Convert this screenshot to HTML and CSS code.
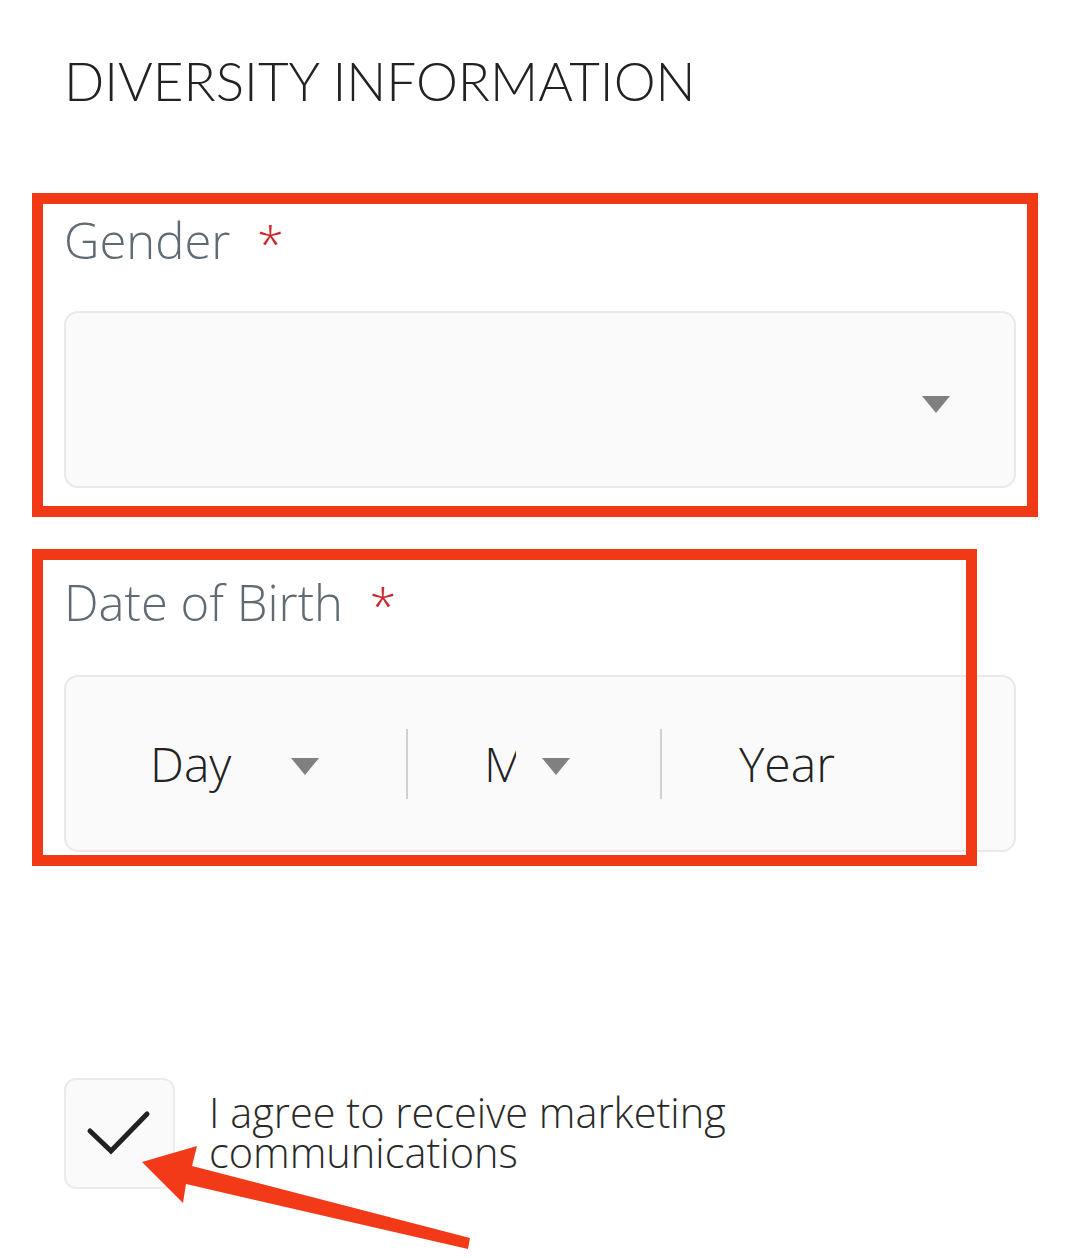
FILE: index.html
```html
<!DOCTYPE html>
<html lang="en">
<head>
<meta charset="utf-8">
<title>Diversity Information</title>
<link rel="stylesheet" href="styles.css">
</head>
<body>
<main class="page">
  <h1 class="heading">DIVERSITY INFORMATION</h1>

  <section class="form">
    <div class="field field-gender">
      <div class="label">Gender <span class="req">*</span></div>
      <div class="select">
        <span class="caret"></span>
      </div>
    </div>

    <div class="field field-dob">
      <div class="label">Date of Birth <span class="req">*</span></div>
      <div class="dob">
        <div class="seg seg-day">
          <span class="seg-text">Day</span>
          <span class="caret"></span>
        </div>
        <div class="seg seg-month">
          <span class="seg-text clip">Month</span>
          <span class="caret"></span>
        </div>
        <div class="seg seg-year">
          <span class="seg-text">Year</span>
        </div>
      </div>
    </div>

    <div class="consent">
      <div class="checkbox">
        <svg width="70" height="50" viewBox="0 0 70 50" aria-hidden="true">
          <polyline points="6,22 27,42 63,5" fill="none" stroke="#222" stroke-width="5" stroke-linecap="round" stroke-linejoin="miter"/>
        </svg>
      </div>
      <p class="consent-text">I agree to receive marketing communications</p>
    </div>

    <div class="mark mark-gender"></div>
    <div class="mark mark-dob"></div>
    <svg class="arrow" width="1080" height="1258" viewBox="0 0 1080 1258" aria-hidden="true">
      <polygon points="142,1162 197,1146 192,1166 470,1238 468,1249 186,1184 183,1203" fill="#f33a18"/>
    </svg>
  </section>
</main>
</body>
</html>
```
FILE: styles.css
```css
* { box-sizing: border-box; }
html, body { margin: 0; padding: 0; background: #fff; }
body {
  width: 1080px;
  height: 1258px;
  overflow: hidden;
  font-family: "Open Sans", "Liberation Sans", sans-serif;
  position: relative;
}
.page {
  padding: 0 0 0 64px;
}
.heading {
  margin: 0;
  padding-top: 49px;
  font-family: "Lato", "Liberation Sans", sans-serif;
  font-weight: 300;
  font-size: 53px;
  line-height: 64px;
  letter-spacing: 0;
  color: #222;
}
.form {
  padding-top: 102px;
}
.field {
  width: 952px;
}
.label {
  font-weight: 300;
  font-size: 49px;
  line-height: 50px;
  color: #5f6a72;
  height: 50px;
}
.req {
  color: #c8262b;
  margin-left: 14px;
  font-size: 48px;
  position: relative;
  top: 2px;
}
.select {
  margin-top: 46px;
  height: 177px;
  background: #fafafa;
  border: 2px solid #e9e9e9;
  border-radius: 14px;
  display: flex;
  align-items: center;
  justify-content: flex-end;
  padding-right: 64px;
}
.caret {
  display: inline-block;
  width: 0;
  height: 0;
  border-left: 14px solid transparent;
  border-right: 14px solid transparent;
  border-top: 17px solid #808080;
}
.select .caret { margin-top: 10px; }
.field-dob { margin-top: 89px; }
.dob {
  margin-top: 48px;
  height: 177px;
  background: #fafafa;
  border: 2px solid #e9e9e9;
  border-radius: 14px;
  display: flex;
  align-items: center;
}
.seg {
  display: flex;
  align-items: center;
  height: 70px;
}
.seg-day { width: 340px; padding-left: 84px; }
.seg-month { width: 254px; padding-left: 76px; border-left: 2px solid #d0d0d0; }
.seg-year { flex: 1; padding-left: 77px; border-left: 2px solid #d0d0d0; }
.seg-text {
  font-weight: 300;
  font-size: 48px;
  line-height: 70px;
  color: #222;
  white-space: nowrap;
}
.seg-day .caret { margin-left: 60px; margin-top: 6px; }
.seg-month .caret { margin-left: 26px; margin-top: 6px; }
.clip {
  display: inline-block;
  width: 32px;
  overflow: hidden;
}
.consent {
  margin-top: 226px;
  display: flex;
  align-items: flex-start;
}
.checkbox {
  width: 111px;
  height: 111px;
  flex: none;
  background: #fafafa;
  border: 2px solid #ebebeb;
  border-radius: 12px;
  display: flex;
  align-items: center;
  justify-content: center;
}
.checkbox svg { margin-top: 0; margin-left: -2px; }
.consent-text {
  margin: 14px 0 0 34px;
  width: 540px;
  font-weight: 300;
  font-size: 41.5px;
  line-height: 40px;
  color: #2a2a2a;
}
.mark {
  position: absolute;
  border: 11px solid #f23916;
  pointer-events: none;
}
.mark-gender { left: 32px; top: 193px; width: 1006px; height: 324px; }
.mark-dob { left: 32px; top: 549px; width: 945px; height: 317px; }
.arrow {
  position: absolute;
  left: 0;
  top: 0;
  pointer-events: none;
}
```
